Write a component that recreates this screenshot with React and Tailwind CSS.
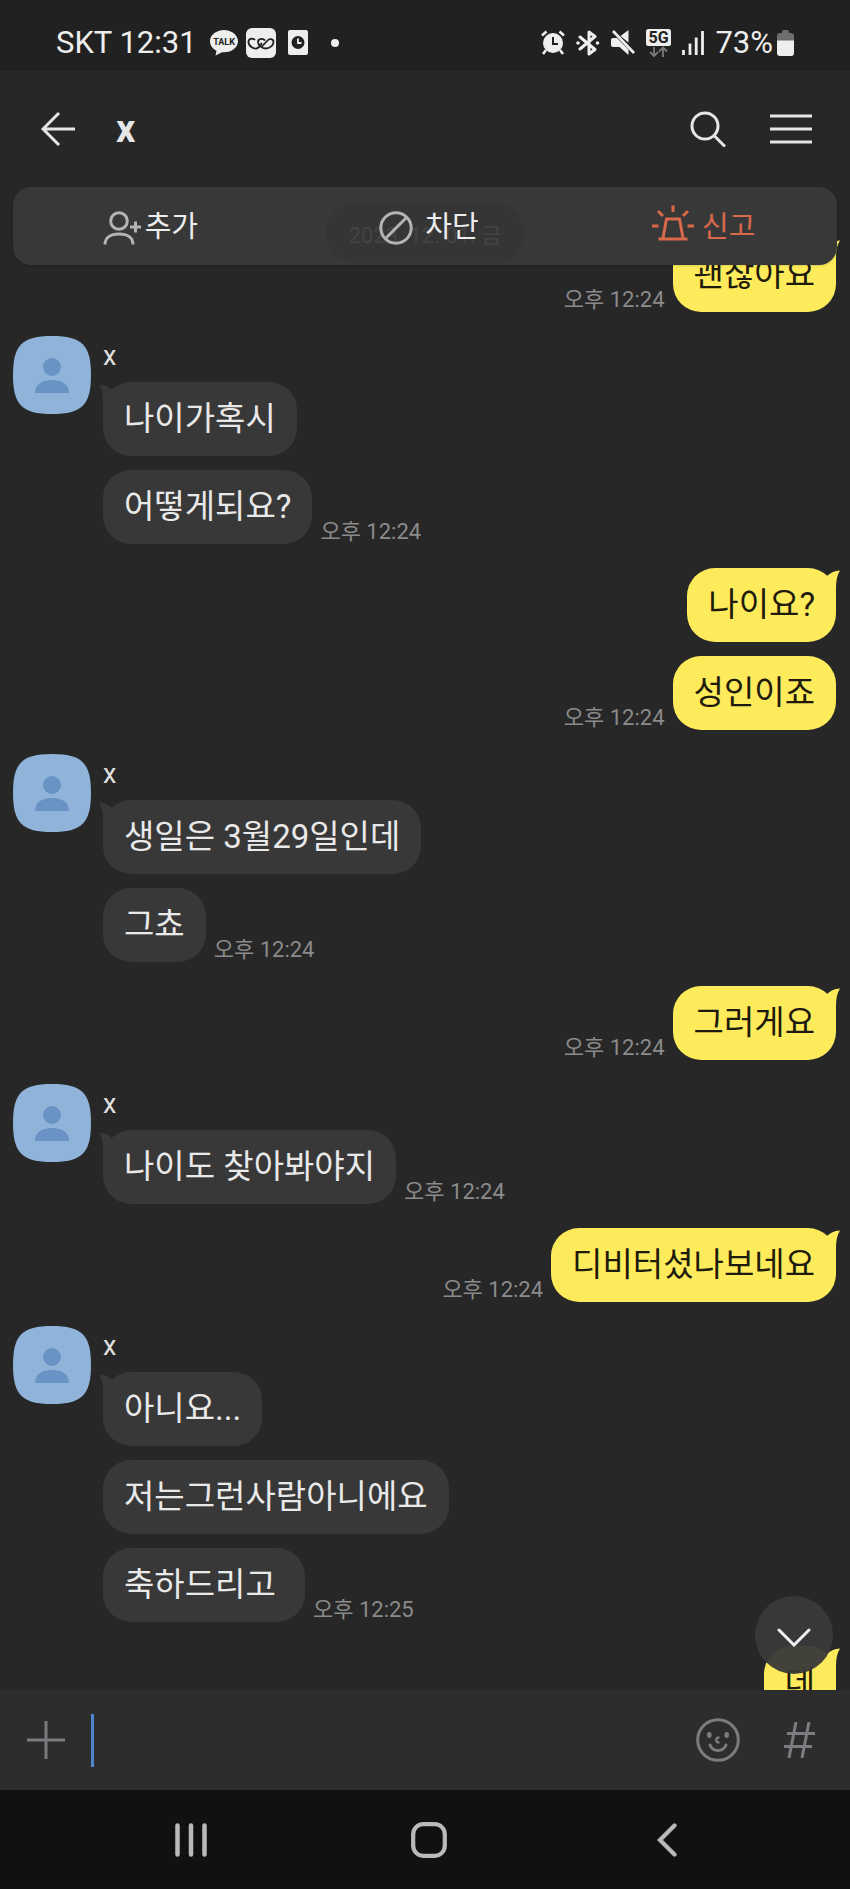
const groups = [
    {
        mine: true,
        messages: [{ text: "괜찮아요", time: "오후 12:24" }],
    },
    {
        name: "x",
        messages: [
            { text: "나이가혹시" },
            { text: "어떻게되요?", time: "오후 12:24" },
        ],
    },
    {
        mine: true,
        messages: [
            { text: "나이요?" },
            { text: "성인이죠", time: "오후 12:24" },
        ],
    },
    {
        name: "x",
        messages: [
            { text: "생일은 3월29일인데" },
            { text: "그쵸", time: "오후 12:24" },
        ],
    },
    {
        mine: true,
        messages: [{ text: "그러게요", time: "오후 12:24" }],
    },
    {
        name: "x",
        messages: [{ text: "나이도 찾아봐야지", time: "오후 12:24" }],
    },
    {
        mine: true,
        messages: [{ text: "디비터셨나보네요", time: "오후 12:24" }],
    },
    {
        name: "x",
        messages: [
            { text: "아니요..." },
            { text: "저는그런사람아니에요" },
            { text: "축하드리고 ", time: "오후 12:25" },
        ],
    },
    {
        mine: true,
        messages: [{ text: "데" }],
    },
];

function StatusBar() {
    return (
        <div className="flex h-[71px] shrink-0 items-center justify-between bg-[#212121] pt-3.5 pr-14 pl-14 text-[31px] leading-9 text-[#eeeeec]">
            <div className="flex items-center">
                <span>SKT 12:31</span>

                {/* Talk */}
                <svg width="28" height="26" viewBox="0 0 28 26" className="ml-[13px]">
                    <path
                        d="M14 0C6.300 0 0 5 0 11.200c0 4 2.600 7.500 6.500 9.500L5.500 25.500l6.500-3.300c.7.100 1.300.1 2 .1 7.700 0 14-5 14-11.100S21.700 0 14 0z"
                        fill="#eeeeec"
                    />
                    <text
                        x="14"
                        y="15"
                        textAnchor="middle"
                        fontSize="9"
                        fontWeight="700"
                        fill="#212121"
                    >
                        TALK
                    </text>
                </svg>

                {/* Loop */}
                <svg width="30" height="30" viewBox="0 0 30 30" className="ml-2">
                    <rect width="30" height="30" rx="6" fill="#eeeeec" />
                    <path
                        d="M8.500 11.500C5 9.500 2 11.500 2.500 14.500 3 18 7 21 10.500 20.500c3-.5 4-3 5-5M18.500 12c-2.500-2-6.500-1-6.500 2 0 3 4 6.500 7.500 6.500 4.500 0 8-3.500 8-6.500s-4-4-6-1.500L15.500 19"
                        fill="none"
                        stroke="#212121"
                        strokeWidth="1.800"
                        strokeLinecap="round"
                    />
                </svg>

                {/* Clock card */}
                <svg width="20" height="25" viewBox="0 0 20 25" className="ml-3">
                    <rect width="20" height="25" rx="2" fill="#eeeeec" />
                    <circle cx="10" cy="12.500" r="6.500" fill="#212121" />
                    <path
                        d="M10 8.500v4.500h3.500"
                        fill="none"
                        stroke="#eeeeec"
                        strokeWidth="1.800"
                    />
                </svg>

                <span className="ml-[23px] size-2 rounded-full bg-[#eeeeec]" />
            </div>

            <div className="flex items-center gap-[11px]">
                {/* Alarm */}
                <svg width="24" height="25" viewBox="0 0 24 25">
                    <circle cx="12" cy="13" r="10" fill="#eeeeec" />
                    <path
                        d="M1 5.500L5.500 1.500M23 5.500L18.500 1.500M5 20l-3 4M19 20l3 4"
                        stroke="#eeeeec"
                        strokeWidth="2.600"
                    />
                    <path
                        d="M12 7v7h5"
                        fill="none"
                        stroke="#212121"
                        strokeWidth="2"
                    />
                </svg>

                {/* Bluetooth */}
                <svg width="24" height="26" viewBox="0 0 24 26">
                    <path
                        d="M4 7l15 12.500-6 4.500V2l6 4.500L4 19"
                        fill="none"
                        stroke="#eeeeec"
                        strokeWidth="3"
                        strokeLinejoin="round"
                        strokeLinecap="round"
                    />
                    <circle cx="2" cy="13" r="1.800" fill="#eeeeec" />
                    <circle cx="21.500" cy="13" r="1.800" fill="#eeeeec" />
                </svg>

                {/* Muted speaker */}
                <svg width="24" height="25" viewBox="0 0 24 25">
                    <path
                        d="M17.500 0v12.500L9.500 6zM2 8h4l11.500 11.500V25L8.500 17H2c-1.200 0-2-.8-2-2v-5c0-1.200.8-2 2-2z"
                        fill="#eeeeec"
                    />
                    <path d="M2 1l21 22" stroke="#eeeeec" strokeWidth="2.600" />
                </svg>

                {/* 5G */}
                <svg width="25" height="28" viewBox="0 0 25 28">
                    <rect width="25" height="17" rx="2.500" fill="#eeeeec" />
                    <text
                        x="12.500"
                        y="14"
                        textAnchor="middle"
                        fontSize="16"
                        fontWeight="700"
                        fill="#212121"
                    >
                        5G
                    </text>
                    <path
                        d="M8 18v8.500M4 23l4 4 4-4M17 28v-8.500M13 22.500l4-4 4 4"
                        fill="none"
                        stroke="#7b7b7b"
                        strokeWidth="1.800"
                    />
                </svg>

                {/* Signal */}
                <svg width="22" height="24" viewBox="0 0 22 24">
                    <path
                        d="M1.500 19v5M8 12.500V24M14.200 6.500V24M20.500 0v24"
                        stroke="#eeeeec"
                        strokeWidth="2.800"
                    />
                </svg>

                <div className="flex items-center gap-1">
                    <span>73%</span>
                    <svg width="17" height="26" viewBox="0 0 17 26">
                        <path
                            d="M5 2c0-1.200.7-2 2-2h3c1.300 0 2 .8 2 2v1h2c2 0 3 1 3 3v5H0V6c0-2 1-3 3-3h2z"
                            fill="#6d6d6d"
                        />
                        <path
                            d="M0 10.500h17V23c0 2-1 3-3 3H3c-2 0-3-1-3-3z"
                            fill="#eeeeec"
                        />
                    </svg>
                </div>
            </div>
        </div>
    );
}

function Header() {
    return (
        <header className="flex h-[116px] shrink-0 items-center pr-[38px] pl-[41px] text-[#e6e6e6]">
            <button aria-label="뒤로">
                <svg
                    width="34"
                    height="34"
                    viewBox="0 0 34 34"
                    fill="none"
                    stroke="currentColor"
                    strokeWidth="3"
                >
                    <path d="M18 1L2 17l16 16M2 17h32" />
                </svg>
            </button>

            <h1 className="ml-[41px] text-[38px] leading-11 font-bold">x</h1>

            <button aria-label="검색" className="ml-auto">
                <svg
                    width="36"
                    height="36"
                    viewBox="0 0 36 36"
                    fill="none"
                    stroke="currentColor"
                    strokeWidth="3"
                >
                    <circle cx="15" cy="15" r="13" />
                    <path d="M24 24.500L35 35.500" />
                </svg>
            </button>

            <button aria-label="메뉴" className="ml-11">
                <svg
                    width="42"
                    height="30"
                    viewBox="0 0 42 30"
                    stroke="currentColor"
                    strokeWidth="3"
                >
                    <path d="M0 2h42M0 15h42M0 28h42" />
                </svg>
            </button>
        </header>
    );
}

function ActionBanner() {
    return (
        <div className="absolute inset-x-[13px] top-0 z-10 grid h-[78px] grid-cols-[275fr_283fr_267fr] rounded-[18px] bg-[#383838] text-[29px] text-[#ededed] shadow-sm">
            {/* Date chip showing faintly through the banner */}
            <div className="absolute top-4 left-1/2 flex h-[60px] w-[198px] -translate-x-1/2 items-center justify-center rounded-full bg-[#353535] pt-1 text-[22px] whitespace-nowrap text-[#444444]">
                2023. 12. 01. 금
            </div>

            <button className="relative flex items-center justify-center gap-1 pt-[3px]">
                <svg
                    width="38"
                    height="34"
                    viewBox="0 0 38 34"
                    fill="none"
                    stroke="#b4b4b4"
                    strokeWidth="3"
                >
                    <circle cx="16" cy="10" r="8.300" />
                    <path d="M2 33.500c0-7 5.500-10.500 14-10.500s14 3.500 14 10.500M27 16h11M32.500 10.500v11" />
                </svg>
                추가
            </button>

            <button className="relative flex items-center justify-center gap-3 pt-[3px]">
                <svg
                    width="34"
                    height="34"
                    viewBox="0 0 34 34"
                    fill="none"
                    stroke="#b4b4b4"
                    strokeWidth="3"
                >
                    <circle cx="17" cy="17" r="15.200" />
                    <path d="M6.500 27.500l21-21" />
                </svg>
                차단
            </button>

            <button className="relative flex items-center justify-center gap-2 pt-[3px] text-[#d9694b]">
                <svg
                    width="42"
                    height="50"
                    viewBox="0 0 42 50"
                    fill="none"
                    stroke="currentColor"
                    strokeWidth="3"
                >
                    <path d="M6.500 36h29M11 35l3.500-19h13L31 35M21 2.500V9M6 8l5 5M36 8l-5 5M0 23h6.500M35.500 23H42" />
                </svg>
                신고
            </button>
        </div>
    );
}

function Avatar() {
    return (
        <svg width="78" height="78" viewBox="0 0 78 78" className="shrink-0">
            <path
                d="M39 0C69 0 78 9 78 39S69 78 39 78 0 69 0 39 9 0 39 0z"
                fill="#90b3da"
            />
            <circle cx="39" cy="31" r="9" fill="#6893c4" />
            <path d="M22 57c0-9 7-13 17-13s17 4 17 13z" fill="#6893c4" />
        </svg>
    );
}

function Bubble({ text, mine, tail }) {
    return (
        <div
            className={
                mine
                    ? "relative rounded-[28px] bg-[#fdeb5b] px-[21px] text-[#1f1b0c]"
                    : "relative rounded-[28px] bg-[#383838] px-[21px] text-[#e9e9e9]"
            }
        >
            {tail && (
                <svg
                    width="20"
                    height="30"
                    viewBox="0 0 20 30"
                    className={
                        mine
                            ? "absolute top-0.5 -right-1 -scale-x-100 fill-[#fdeb5b]"
                            : "absolute top-0.5 -left-1 fill-[#383838]"
                    }
                >
                    <path d="M0 .5C6 .8 10 3 13 6l7 10L4 30V18C4 11 3 5 0 .5z" />
                </svg>
            )}
            <p className="relative text-[33px] leading-[74px] whitespace-pre">{text}</p>
        </div>
    );
}

function MessageGroup({ group }) {
    const { mine, name, messages } = group;

    return (
        <div className="flex gap-3">
            {!mine && <Avatar />}

            <div className="flex flex-1 flex-col">
                {name && (
                    <p className="mb-1.5 text-[27px] leading-10 text-[#e0e0e0]">
                        {name}
                    </p>
                )}

                <div className="flex flex-col gap-3.5">
                    {messages.map((message, index) => (
                        <div
                            key={message.text}
                            className={
                                mine
                                    ? "flex flex-row-reverse items-end gap-2"
                                    : "flex items-end gap-2"
                            }
                        >
                            <Bubble
                                text={message.text}
                                mine={mine}
                                tail={index === 0}
                            />
                            {message.time && (
                                <span className="text-[22px] leading-6 text-[#8b8b8b]">
                                    {message.time}
                                </span>
                            )}
                        </div>
                    ))}
                </div>
            </div>
        </div>
    );
}

function InputBar() {
    return (
        <div className="flex h-[100px] shrink-0 items-center bg-[#2d2d2d] pr-[35px] pl-[27px] text-[#7b7b80]">
            <button aria-label="첨부">
                <svg
                    width="38"
                    height="38"
                    viewBox="0 0 38 38"
                    stroke="currentColor"
                    strokeWidth="3"
                >
                    <path d="M0 19h38M19 0v38" />
                </svg>
            </button>

            <input
                type="text"
                aria-label="메시지 입력"
                className="ml-[26px] h-[53px] min-w-0 flex-1 border-l-3 border-[#4d86cf] bg-transparent pl-1 text-[33px] text-[#e9e9e9] outline-none"
            />

            <button aria-label="이모티콘" className="ml-4">
                <svg
                    width="44"
                    height="44"
                    viewBox="0 0 44 44"
                    fill="none"
                    stroke="currentColor"
                    strokeWidth="3"
                    strokeLinecap="round"
                >
                    <circle cx="22" cy="22" r="20.300" />
                    <path d="M14 27c1.500 4 4.500 5.500 8 5.500s6.500-1.500 8-5.500" />
                    <path d="M22.500 19.500c-3 .5-3 4.500 0 5" strokeWidth="2.400" />
                    <ellipse cx="13.300" cy="17" rx="2.300" ry="3" fill="currentColor" stroke="none" />
                    <ellipse cx="30.700" cy="17" rx="2.300" ry="3" fill="currentColor" stroke="none" />
                </svg>
            </button>

            <button aria-label="샵검색" className="ml-11">
                <svg
                    width="31"
                    height="36"
                    viewBox="0 0 31 36"
                    fill="none"
                    stroke="currentColor"
                    strokeWidth="3"
                >
                    <path d="M3 11.500h28M0 24.500h28M12 0L5 36M25 0l-7 36" />
                </svg>
            </button>
        </div>
    );
}

function NavBar() {
    return (
        <nav className="grid h-[99px] shrink-0 grid-cols-3 bg-[#111111] pr-16 pl-[72px] text-[#bababa]">
            <button aria-label="최근 앱" className="flex items-center justify-center">
                <svg
                    width="32"
                    height="34"
                    viewBox="0 0 32 34"
                    stroke="currentColor"
                    strokeWidth="4.500"
                    strokeLinecap="round"
                >
                    <path d="M2.500 2.500v29M16 2.500v29M29.500 2.500v29" />
                </svg>
            </button>

            <button aria-label="홈" className="flex items-center justify-center">
                <svg
                    width="36"
                    height="36"
                    viewBox="0 0 36 36"
                    fill="none"
                    stroke="currentColor"
                    strokeWidth="4.200"
                >
                    <rect x="2.200" y="2.200" width="31.600" height="31.600" rx="10" />
                </svg>
            </button>

            <button aria-label="뒤로 가기" className="flex items-center justify-center">
                <svg
                    width="20"
                    height="34"
                    viewBox="0 0 20 34"
                    fill="none"
                    stroke="currentColor"
                    strokeWidth="4.200"
                    strokeLinecap="round"
                >
                    <path d="M17.500 2.500L3 17l14.500 14.500" />
                </svg>
            </button>
        </nav>
    );
}

function App() {
    return (
        <div className="flex h-screen flex-col bg-[#272727] font-[Roboto,'Noto_Sans_CJK_KR',sans-serif]">
            <StatusBar />

            <Header />

            {/* Conversation */}
            <main className="relative min-h-0 flex-1 overflow-hidden">
                <ActionBanner />

                <div className="flex flex-col gap-6 pt-[51px] pr-3.5 pl-[13px]">
                    {groups.map((group, index) => (
                        <MessageGroup key={index} group={group} />
                    ))}
                </div>

                <button
                    aria-label="맨 아래로"
                    className="absolute right-[17px] bottom-4 flex size-[78px] items-center justify-center rounded-full bg-[#393939]/95 pt-1 text-[#f0f0f0]"
                >
                    <svg
                        width="34"
                        height="20"
                        viewBox="0 0 34 20"
                        fill="none"
                        stroke="currentColor"
                        strokeWidth="3"
                        strokeLinecap="round"
                    >
                        <path d="M2 3l15 15L32 3" />
                    </svg>
                </button>
            </main>

            <InputBar />

            <NavBar />
        </div>
    );
}

export default App;
